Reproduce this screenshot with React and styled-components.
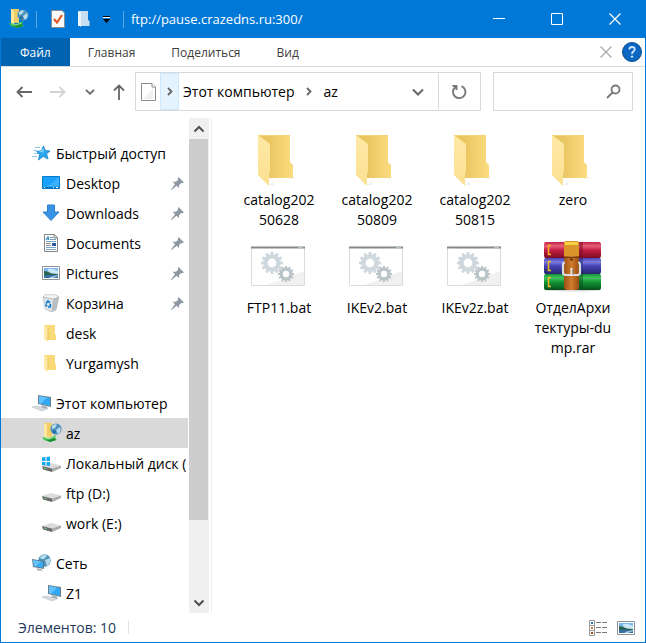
import styled, { createGlobalStyle } from 'styled-components';

const GlobalStyle = createGlobalStyle`
  * {
    box-sizing: border-box;
  }

  body {
    margin: 0;
    background: #fff;
    color: #000;
    font-family: "Open Sans", "Noto Sans", sans-serif;
    font-size: 14px;
  }

  button, input {
    font: inherit;
    color: inherit;
    padding: 0;
    border: 0;
    background: none;
  }

  svg {
    display: block;
    flex-shrink: 0;
  }
`

const Window = styled.div`
  display: flex;
  flex-direction: column;
  height: 100vh;
  border: 1px solid #0078d7;
  border-top: 0;
`

const TitleBar = styled.header`
  display: flex;
  align-items: center;
  flex-shrink: 0;
  height: 38px;
  padding: 0 1px 0 8px;
  background: #0078d7;
  color: #fff;
`

const QuickTools = styled.div`
  display: flex;
  align-items: center;
  gap: 11px;
  padding: 0 12px 0 14px;
`

const TitleDivider = styled.span`
  width: 1px;
  height: 17px;
  margin-left: ${props => props.$inset ? '7px' : 0};
  background: #5aa7e6;
`

const Title = styled.h1`
  flex: 1;
  margin: 0 0 0 7px;
  font-size: 13px;
  font-weight: normal;
`

const WindowButton = styled.button`
  display: flex;
  align-items: center;
  justify-content: center;
  width: 58px;
  height: 38px;
`

const Ribbon = styled.nav`
  display: flex;
  align-items: center;
  flex-shrink: 0;
  height: 29px;
  padding-right: 3px;
  border-bottom: 1px solid #dadbdc;
`

const RibbonTab = styled.button`
  height: 28px;
  padding: 0 ${props => props.$active ? '19px' : '18px'};
  background: ${props => props.$active ? '#0063b1' : 'transparent'};
  color: ${props => props.$active ? '#fff' : '#3c3c3c'};
  font-size: 12px;
`

const Spacer = styled.div`
  flex: 1;
`

const RibbonTools = styled.div`
  display: flex;
  align-items: center;
  gap: 10px;
`

const Toolbar = styled.div`
  display: flex;
  align-items: center;
  flex-shrink: 0;
  height: 51px;
  padding: 0 12px 2px 15px;
`

const History = styled.div`
  display: flex;
  align-items: center;
  justify-content: space-between;
  width: 109px;
  margin-right: 10px;
`

const Address = styled.div`
  display: flex;
  flex: 1;
  height: 39px;
  border: 1px solid #d9d9d9;
`

const AddressPart = styled.button`
  display: flex;
  align-items: center;
  justify-content: center;
  width: ${props => props.$width || 'auto'};
  padding: 0 ${props => props.$text ? '3px' : 0};
  border: 1px solid ${props => props.$hot ? '#cce8ff' : 'transparent'};
  background: ${props => props.$hot ? '#e5f3ff' : 'transparent'};
  border-left-color: ${props => props.$divided ? '#d9d9d9' : ''};
`

const Search = styled.label`
  display: flex;
  align-items: center;
  width: 140px;
  height: 39px;
  margin-left: 12px;
  padding: 0 10px;
  border: 1px solid #d9d9d9;

  input {
    flex: 1;
    min-width: 0;
    outline: none;
  }
`

const Body = styled.div`
  display: flex;
  flex: 1;
  min-height: 0;
`

const Sidebar = styled.nav`
  width: 187px;
  padding-top: 20px;
  overflow: hidden;
`

const Tree = styled.ul`
  margin: 0 0 10px;
  padding: 0;
  list-style: none;
`

const TreeLink = styled.a`
  display: flex;
  align-items: center;
  gap: 4px;
  height: 30px;
  padding-right: 2px;
  padding-left: ${props => props.$root ? '31px' : '41px'};
  background: ${props => props.$selected ? '#d9d9d9' : 'transparent'};
  color: #000;
  text-decoration: none;
  white-space: nowrap;
`

const TreeText = styled.span`
  flex: 1;
  min-width: 0;
  overflow: hidden;
`

const Pin = styled.span`
  margin-right: 2px;
`

const ScrollBar = styled.div`
  display: flex;
  flex-direction: column;
  width: 20px;
  margin-left: 1px;
  background: #f0f0f0;
`

const ScrollButton = styled.button`
  display: flex;
  align-items: center;
  justify-content: center;
  height: 21px;
`

const ScrollTrack = styled.div`
  flex: 1;
`

const ScrollThumb = styled.div`
  width: 19px;
  height: 84%;
  background: #cdcdcd;
`

const Files = styled.main`
  display: grid;
  grid-template-columns: repeat(auto-fill, 98px);
  grid-auto-rows: min-content;
  row-gap: 9px;
  flex: 1;
  margin-left: 2px;
  padding: 13px 20px 0 18px;
  border-left: 1px solid #f0f0f0;
`

const Tile = styled.a`
  display: flex;
  flex-direction: column;
  align-items: center;
  gap: 1px;
  color: #000;
  text-decoration: none;
`

const TileName = styled.span`
  width: 78px;
  line-height: 20px;
  text-align: center;
  word-break: break-all;
`

const StatusBar = styled.footer`
  display: flex;
  align-items: center;
  flex-shrink: 0;
  height: 29px;
  padding: 0 10px 0 17px;
  color: #1e395b;
`

const StatusDivider = styled.span`
  width: 1px;
  height: 13px;
  margin-left: 12px;
  background: #e3e3e3;
`

const ViewButton = styled.button`
  margin-left: 10px;
`

function Stroke({ w, h, d, color = '#666', width = 1.8 }) {
  return (
    <svg width={w} height={h} viewBox={`0 0 ${w} ${h}`} fill="none" stroke={color} strokeWidth={width}>
      <path d={d} />
    </svg>
  )
}

function FtpIcon() {
  return (
    <svg width="20" height="20" viewBox="0 0 20 20">
      <path d="M2 0H10V14H2Z" fill="#f0cd66" />
      <path d="M2 0L5 2V16L2 13Z" fill="#ffe79c" />
      <circle cx="14" cy="6" r="5.6" fill="#4d91bd" />
      <path d="M10 3Q13 0 15 2L13 5L10 6ZM14 7L18 4Q20 8 16 11Z" fill="#b8dce9" />
      <path d="M12 7L14 8L13 11L10 9Z" fill="#276b9c" />
      <path d="M0 14L6 16L14 12L13 15L15 17L8 19L2 17Z" fill="#42c44d" />
      <path d="M4 17L13 15L14 17L8 19Z" fill="#218f3b" />
      <path d="M2 14L7 16L12 14" fill="none" stroke="#8be58a" />
    </svg>
  )
}

function StarIcon() {
  return (
    <svg width="20" height="18" viewBox="0 0 20 18">
      <path d="M11.5 2L13.3 6.500L18 7L14.600 9.800L16 15L11.200 12.400L6.500 16L7.600 10.600L4.500 7.500L9.200 6.700Z" fill="#2aa5ef" stroke="#1682cc" strokeWidth=".8" />
      <path d="M11.300 4L12 8.500L7 8Z" fill="#7bcefa" />
      <path d="M3 3.500H8M1 6.500H5M2 9.500H6M0 12.500H5" stroke="#79bee9" strokeWidth=".8" />
    </svg>
  )
}

function DesktopIcon() {
  return (
    <svg width="20" height="14" viewBox="0 0 20 14">
      <path d="M.5 .5H17.5V12.5H.5Z" fill="#18a0fb" stroke="#0878c8" />
      <path d="M17 1V10L5 11Z" fill="#3cb1ff" />
      <path d="M1 11.5H17" stroke="#0870b8" />
      <path d="M2 11.5H3M11 11.5H12M14 11.5H16" stroke="#fff" />
    </svg>
  )
}

function DownloadIcon() {
  return (
    <svg width="20" height="18" viewBox="0 0 20 18">
      <path d="M5.5 1H12.5V8H17L9 16.5L1 8H5.5Z" fill="#3994e4" stroke="#2a7fcd" />
    </svg>
  )
}

function DocumentIcon() {
  return (
    <svg width="20" height="18" viewBox="0 0 20 18">
      <path d="M2.5 .5H12.5L15.5 3.5V17.5H2.5Z" fill="#fff" stroke="#858585" />
      <path d="M12 .5V4H15.5" fill="#ddd" stroke="#858585" />
      <path d="M4 6L6 2.5L7 6M4.5 5H7" fill="none" stroke="#2480bd" />
      <path d="M8 3.5H11M8 5.5H14M4 7.5H14M4 13.5H14M4 15.5H14" stroke="#77a6c8" />
      <path d="M4 9.5H9M4 11.5H9" stroke="#8e8e8e" />
      <path d="M10 9H14V12H10Z" fill="#2d5799" />
    </svg>
  )
}

function PictureIcon() {
  return (
    <svg width="18" height="14" viewBox="0 0 18 14">
      <path d="M.5 .5H17.5V13.5H.5Z" fill="#fff" stroke="#8d9299" />
      <path d="M2 2H16V8H2Z" fill="#79b9ef" />
      <path d="M6 3Q10 2 16 5V8H7Z" fill="#cce7f8" />
      <path d="M2 5L5 5.5L10 7.5L16 8V9H2Z" fill="#2d6355" />
      <path d="M2 9H16V12H2Z" fill="#386fa3" />
      <path d="M8 11L16 9V10L11 12H8Z" fill="#a7cee0" />
    </svg>
  )
}

function BinIcon() {
  return (
    <svg width="20" height="18" viewBox="0 0 20 18">
      <path d="M1 3L11 5L17 3L14 16L9 18L3 15Z" fill="#dfe3e6" stroke="#b2b7bb" strokeWidth=".6" />
      <path d="M11 5L17 3L14 16L9.5 18Z" fill="#b9bec2" />
      <path d="M1 3L4 .5L8 1L12 0L17 3L11 5Z" fill="#f3f5f6" stroke="#aaa" strokeWidth=".6" />
      <path d="M4 9.5L6 7L8 9M8.5 10L8 13H6M5 12.5L3.5 10.5" fill="none" stroke="#087bd3" strokeWidth="1.7" />
    </svg>
  )
}

function SmallFolderIcon() {
  return (
    <svg width="20" height="18" viewBox="0 0 20 18">
      <path d="M2 1H13V10L14 11V16H4Z" fill="#f9d978" />
      <path d="M2 1L6 4V18L2 15Z" fill="#ffe9a6" />
      <path d="M6 4V16" stroke="#e8c35c" />
    </svg>
  )
}

function ComputerIcon() {
  return (
    <svg width="20" height="18" viewBox="0 0 20 18">
      <path d="M6 1L19 3V13L6 10Z" fill="#6d7f8c" />
      <path d="M7 2L18 4V12L7 9.3Z" fill="#31a8f5" />
      <path d="M7 2L15 3.5L9 9.8L7 9.3Z" fill="#62c2fc" />
      <path d="M10 11L15 12.5L16 15L9 14Z" fill="#a9b2b9" />
      <path d="M0 13L5 12L15 15L10 17Z" fill="#d5dbe0" stroke="#b7c0c7" strokeWidth=".6" />
    </svg>
  )
}

function DriveIcon({ system }) {
  return (
    <svg width="20" height="18" viewBox="0 0 20 18">
      <path d="M0 12L9 9L19 11.500L10 14.500Z" fill="#dcdcdc" />
      <path d="M0 12L10 14.500V18L1 15.500Z" fill="#6a6a6a" />
      <path d="M10 14.500L19 11.500V14L10 18Z" fill="#aaa" />
      <path d="M2 14L4.500 14.700" stroke="#67d884" />
      {system && <path d="M0 3.500L3.500 3V7H0ZM4.500 3L8 2.500V7H4.500ZM0 8H3.500V11.500L0 11ZM4.500 8H8V12L4.500 11.600Z" fill="#12a9ee" />}
    </svg>
  )
}

function NetworkIcon() {
  return (
    <svg width="20" height="18" viewBox="0 0 20 18">
      <circle cx="12.5" cy="6.5" r="6.2" fill="#4d94bb" />
      <path d="M8 3Q12 -1 15 2L12 5L9 5ZM13 6L18 4Q19 9 15 12Z" fill="#b7dbe8" />
      <path d="M0 5L12 7V15L1 13Z" fill="#637986" />
      <path d="M1 6L11 8V14L2 12Z" fill="#33a8f3" />
      <path d="M1 6L9 7.6L4 12.4L2 12Z" fill="#66c2fa" />
      <path d="M5 14L9 15L11 17L5 16.5Z" fill="#aeb8bf" />
    </svg>
  )
}

function PinIcon() {
  return (
    <svg width="13" height="13" viewBox="0 0 13 13" fill="#8d98a3">
      <path d="M7.5 0L13 5.4L11.5 6L9.5 6.4L8 8.2L8 11L5.5 8.8L.6 13L0 12.4L4 7.3L1.7 4.8L4.9 4.7L6.8 3.2L7 1Z" />
    </svg>
  )
}

function FolderIcon() {
  return (
    <svg width="60" height="58" viewBox="0 0 60 58">
      <defs>
        <linearGradient id="folderBack">
          <stop offset="0.3" stopColor="#eac661" />
          <stop offset="1" stopColor="#fbdc80" />
        </linearGradient>
        <linearGradient id="folderFront" x2="0" y2="1">
          <stop offset="0" stopColor="#ffe9a5" />
          <stop offset="1" stopColor="#fbe092" />
        </linearGradient>
      </defs>
      <path d="M20 54L25 51V54ZM40 47L47 46L43 48Z" fill="#eee" />
      <path d="M9 4H41V31L44 34V47H17Z" fill="url(#folderBack)" />
      <path d="M9 4L21 13V41L20 43V55L9 44Z" fill="url(#folderFront)" />
      <path d="M9 4.5H41" stroke="#f2d27a" />
    </svg>
  )
}

function Gear({ x, y, r, color }) {
  const teeth = Array.from({ length: 12 }, (_, i) => i * 30)

  return (
    <g transform={`translate(${x} ${y})`} fill={color}>
      {teeth.map(angle => (
        <rect key={angle} x={-r * 0.13} y={-r} width={r * 0.26} height={r * 0.35} transform={`rotate(${angle})`} />
      ))}
      <circle r={r * 0.6} fill="none" stroke={color} strokeWidth={r * 0.4} />
    </g>
  )
}

function BatIcon() {
  return (
    <svg width="60" height="58" viewBox="0 0 60 58">
      <path d="M2.5 8.5H55.5V46.5H2.5Z" fill="#fff" stroke="#dcdcdc" />
      <path d="M18 46L55 32V46Z" fill="#f0f0f0" />
      <path d="M2 8.5H56" stroke="#83898c" strokeWidth="2" />
      <path d="M49 8.5H54" stroke="#b9c0c2" />
      <Gear x={23} y={24} r={11} color="#cfd8dd" />
      <Gear x={37} y={35} r={8} color="#b9c3c8" />
    </svg>
  )
}

const books = [
  { y: 3, dark: '#7d0c26', mid: '#c41f43', light: '#e5607c' },
  { y: 19, dark: '#28266f', mid: '#4644b4', light: '#7b7ce0' },
  { y: 35, dark: '#07501b', mid: '#119537', light: '#46c25f' },
]

function RarIcon() {
  return (
    <svg width="60" height="58" viewBox="0 0 60 58">
      <defs>
        {books.map(book => (
          <linearGradient key={book.y} id={`book${book.y}`} x2="0" y2="1">
            <stop offset="0" stopColor={book.mid} />
            <stop offset="0.25" stopColor={book.light} />
            <stop offset="0.5" stopColor={book.mid} />
            <stop offset="1" stopColor={book.dark} />
          </linearGradient>
        ))}
        <linearGradient id="strap">
          <stop offset="0" stopColor="#9c5115" />
          <stop offset="0.5" stopColor="#cf7c2b" />
          <stop offset="1" stopColor="#9a4d12" />
        </linearGradient>
      </defs>
      <ellipse cx="30" cy="51" rx="28" ry="1.5" fill="#ddd" />
      {books.map(book => (
        <g key={book.y}>
          <rect x="1" y={book.y} width="57" height="16" rx="2" fill={`url(#book${book.y})`} />
          <path d={`M36 ${book.y}H40V${book.y + 16}H36Z`} fill={book.dark} opacity=".5" />
          <path d={`M5.500 ${book.y + 3}V${book.y + 13}M5 ${book.y + 3.5}H8M5 ${book.y + 12.5}H8`} stroke="#f4b61e" strokeWidth="1.5" />
          <path d={`M2 ${book.y + 15.5}H57`} stroke={book.dark} />
        </g>
      ))}
      <path d="M21 3L24 2H33L36 3V50L33 51H24L21 50Z" fill="url(#strap)" />
      <path d="M21 3L24 2H33L36 3V17H21Z" fill="#d9942a" />
      <path d="M22 3H35V6H22Z" fill="#f7d343" />
      <path d="M21 18.5H36M21 35.5H36" stroke="#75400f" />
      <circle cx="28.5" cy="20.5" r="1.2" fill="#5a2c08" />
      <path d="M22 23.500Q20 23.500 20 26V33.500Q20 36 22.500 36H34.500Q37 36 37 33.500V26Q37 23.500 35 23.500" fill="none" stroke="#d9dcdf" strokeWidth="2.2" />
      <path d="M28.5 29V37" stroke="#e9ebed" strokeWidth="2" />
      <path d="M29.8 30V36" stroke="#777" strokeWidth=".7" />
    </svg>
  )
}

const tree = [
  {
    name: 'Быстрый доступ',
    icon: <StarIcon />,
    items: [
      { name: 'Desktop', icon: <DesktopIcon />, pinned: true },
      { name: 'Downloads', icon: <DownloadIcon />, pinned: true },
      { name: 'Documents', icon: <DocumentIcon />, pinned: true },
      { name: 'Pictures', icon: <PictureIcon />, pinned: true },
      { name: 'Корзина', icon: <BinIcon />, pinned: true },
      { name: 'desk', icon: <SmallFolderIcon /> },
      { name: 'Yurgamysh', icon: <SmallFolderIcon /> },
    ],
  },
  {
    name: 'Этот компьютер',
    icon: <ComputerIcon />,
    items: [
      { name: 'az', icon: <FtpIcon />, selected: true },
      { name: 'Локальный диск (C:)', icon: <DriveIcon system /> },
      { name: 'ftp (D:)', icon: <DriveIcon /> },
      { name: 'work (E:)', icon: <DriveIcon /> },
    ],
  },
  {
    name: 'Сеть',
    icon: <NetworkIcon />,
    items: [
      { name: 'Z1', icon: <ComputerIcon /> },
    ],
  },
]

const files = [
  { name: 'catalog20250628', icon: <FolderIcon /> },
  { name: 'catalog20250809', icon: <FolderIcon /> },
  { name: 'catalog20250815', icon: <FolderIcon /> },
  { name: 'zero', icon: <FolderIcon /> },
  { name: 'FTP11.bat', icon: <BatIcon /> },
  { name: 'IKEv2.bat', icon: <BatIcon /> },
  { name: 'IKEv2z.bat', icon: <BatIcon /> },
  { name: 'ОтделАрхитектуры-dump.rar', icon: <RarIcon /> },
]

const IconCell = styled.span`
  display: flex;
  width: 20px;
`

function TreeItem({ item, root }) {
  return (
    <TreeLink href="#" $root={root} $selected={item.selected}>
      <IconCell>{item.icon}</IconCell>
      <TreeText>{item.name}</TreeText>
      {item.pinned && <Pin><PinIcon /></Pin>}
    </TreeLink>
  )
}

export default function App() {
  return (
    <Window>
      <GlobalStyle />
      <TitleBar>
        <FtpIcon />
        <TitleDivider $inset />
        <QuickTools>
          <button aria-label="Свойства">
            <svg width="14" height="18" viewBox="0 0 14 18">
              <path d="M.5 .5H11L13.5 3V17.5H.5Z" fill="#fbfbfb" stroke="#8a8f94" />
              <path d="M3 9L6 12.5L11 5" fill="none" stroke="#e0531c" strokeWidth="2" />
            </svg>
          </button>
          <button aria-label="Новая папка">
            <svg width="15" height="16" viewBox="0 0 15 16">
              <path d="M2 0H12V9L13.5 10V15H2Z" fill="#c7dff2" />
              <path d="M2 0L5 2V16L2 14Z" fill="#eef6fc" />
            </svg>
          </button>
          <button aria-label="Настройка панели">
            <svg width="9" height="8" viewBox="0 0 9 8">
              <path d="M1 1.5H8" stroke="#000" />
              <path d="M1 2.5H8" stroke="#fff" />
              <path d="M1 4H8L4.5 8Z" fill="#000" />
            </svg>
          </button>
        </QuickTools>
        <TitleDivider />
        <Title>ftp://pause.crazedns.ru:300/</Title>
        <WindowButton aria-label="Свернуть"><Stroke w={12} h={12} d="M0 5.5H12" color="#fff" width={1} /></WindowButton>
        <WindowButton aria-label="Развернуть"><Stroke w={12} h={12} d="M.5 .5H11.5V11.5H.5Z" color="#fff" width={1} /></WindowButton>
        <WindowButton aria-label="Закрыть"><Stroke w={12} h={12} d="M.5 .5L11.5 11.5M11.5 .5L.5 11.5" color="#fff" width={1.2} /></WindowButton>
      </TitleBar>
      <Ribbon>
        <RibbonTab $active>Файл</RibbonTab>
        <RibbonTab>Главная</RibbonTab>
        <RibbonTab>Поделиться</RibbonTab>
        <RibbonTab>Вид</RibbonTab>
        <Spacer />
        <RibbonTools>
          <button aria-label="Свернуть ленту"><Stroke w={12} h={12} d="M.5 .5L11.5 11.5M11.5 .5L.5 11.5" color="#aaa" width={1.2} /></button>
          <button aria-label="Справка">
            <svg width="20" height="20" viewBox="0 0 20 20">
              <circle cx="10" cy="10" r="9.5" fill="#0b67c2" stroke="#0a4b8c" />
              <path d="M7.3 7.5Q7.5 5 10 5Q12.7 5 12.7 7.3Q12.7 8.8 11.2 9.6Q10 10.3 10 12" fill="none" stroke="#cfe6fa" strokeWidth="1.8" />
              <circle cx="10" cy="14.6" r="1.2" fill="#cfe6fa" />
            </svg>
          </button>
        </RibbonTools>
      </Ribbon>
      <Toolbar>
        <History>
          <button aria-label="Назад"><Stroke w={16} h={12} d="M16 6H1.5M6.5 1L1.5 6L6.5 11" /></button>
          <button aria-label="Вперёд"><Stroke w={16} h={12} d="M0 6H14.5M9.5 1L14.5 6L9.5 11" color="#d3d3d3" /></button>
          <button aria-label="Последние расположения"><Stroke w={10} h={6} d="M1 .8L5 4.8L9 .8" /></button>
          <button aria-label="Вверх"><Stroke w={12} h={16} d="M6 16V1.5M1 6.5L6 1.5L11 6.5" /></button>
        </History>
        <Address>
          <AddressPart $width="24px" aria-label="Путь">
            <svg width="15" height="18" viewBox="0 0 15 18">
              <path d="M.5 .5H11L14.5 4V17.5H.5Z" fill="#fff" stroke="#8b8b8b" />
              <path d="M11 .5V4H14.5" fill="#fff" stroke="#8b8b8b" />
              <path d="M2 16L12 6V16Z" fill="#f0f0f0" />
            </svg>
          </AddressPart>
          <AddressPart $width="19px" $hot aria-label="Показать корень"><Stroke w={6} h={9} d="M1 1L4.5 4.5L1 8" /></AddressPart>
          <AddressPart $text>Этот компьютер</AddressPart>
          <AddressPart $width="21px" aria-label="Показать папки"><Stroke w={6} h={9} d="M1 1L4.5 4.5L1 8" /></AddressPart>
          <AddressPart $text>az</AddressPart>
          <Spacer />
          <AddressPart $width="41px" aria-label="Предыдущие адреса"><Stroke w={12} h={8} d="M1 1.5L6 6.5L11 1.5" width={2} /></AddressPart>
          <AddressPart $width="42px" $divided aria-label="Обновить">
            <Stroke w={16} h={16} d="M10.5 2.2A6.2 6.2 0 1 1 4.5 3M1.5 2H5.5V6" width={1.9} color="#777" />
          </AddressPart>
        </Address>
        <Search>
          <input type="search" aria-label="Поиск" />
          <Stroke w={16} h={16} d="M13.5 5.5A4 4 0 1 1 5.5 5.5A4 4 0 1 1 13.5 5.5M6.5 8.5L1 14" color="#777" />
        </Search>
      </Toolbar>
      <Body>
        <Sidebar>
          {tree.map(group => (
            <Tree key={group.name}>
              <li><TreeItem item={group} root /></li>
              {group.items.map(item => <li key={item.name}><TreeItem item={item} /></li>)}
            </Tree>
          ))}
        </Sidebar>
        <ScrollBar>
          <ScrollButton aria-label="Прокрутить вверх"><Stroke w={12} h={8} d="M1.5 6.5L6 2L10.5 6.5" color="#505050" width={2} /></ScrollButton>
          <ScrollTrack><ScrollThumb /></ScrollTrack>
          <ScrollButton aria-label="Прокрутить вниз"><Stroke w={12} h={8} d="M1.5 1.5L6 6L10.5 1.5" color="#505050" width={2} /></ScrollButton>
        </ScrollBar>
        <Files>
          {files.map(file => (
            <Tile key={file.name} href="#">
              {file.icon}
              <TileName>{file.name}</TileName>
            </Tile>
          ))}
        </Files>
      </Body>
      <StatusBar>
        <span>Элементов: 10</span>
        <StatusDivider />
        <Spacer />
        <ViewButton aria-label="Таблица">
          <svg width="18" height="16" viewBox="0 0 18 16">
            <path d="M.5 .5H5.5V15.5H.5ZM.5 5.5H5.5M.5 10.5H5.5" fill="#fff" stroke="#999" />
            <path d="M2 3H4" stroke="#2688a8" strokeWidth="2" />
            <path d="M2 8H4" stroke="#b88431" strokeWidth="2" />
            <path d="M2 13H4" stroke="#b54d2b" strokeWidth="2" />
            <path d="M7 2.5H12M13 2.5H18M7 7.5H12M13 7.5H18M7 12.5H12M13 12.5H18" stroke="#777" />
          </svg>
        </ViewButton>
        <ViewButton aria-label="Крупные значки"><PictureIcon /></ViewButton>
      </StatusBar>
    </Window>
  )
}
